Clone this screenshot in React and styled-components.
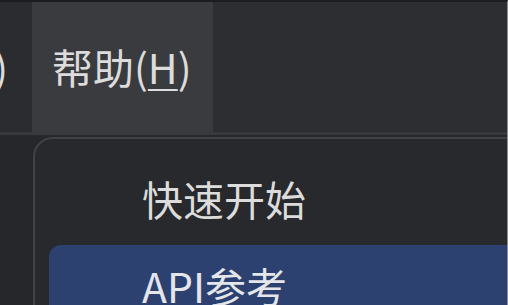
import styled, { createGlobalStyle } from "styled-components"

const Global = createGlobalStyle`
  html, body {
    margin: 0;
    padding: 0;
    background: #26272a;
  }
  * { box-sizing: border-box; }
`

const Window = styled.div`
  position: relative;
  width: 508px;
  height: 305px;
  overflow: hidden;
  background: #26272a;
  border-top: 2px solid #1c1d20;
  border-right: 1px solid #8e8f92;
  font-family: "Noto Sans CJK SC", "Noto Sans", sans-serif;
  color: #dcdcdc;
`

const MenuBar = styled.div`
  display: flex;
  height: 133px;
  background: #2d2e32;
  border-bottom: 3px solid #38393d;
`

const MenuItem = styled.div`
  display: flex;
  align-items: center;
  justify-content: ${p => (p.$clipped ? "flex-end" : "flex-start")};
  width: ${p => (p.$clipped ? "32px" : "auto")};
  overflow: hidden;
  white-space: nowrap;
  padding: 0 ${p => (p.$clipped ? "24px" : "21px")} 2px ${p => (p.$clipped ? "0" : "20px")};
  font-size: 41px;
  background: ${p => (p.$active ? "#3a3b3f" : "#2b2c30")};
  flex-shrink: 0;
`

const Key = styled.span`
  text-decoration: underline;
  text-decoration-thickness: 2px;
  text-underline-offset: 5px;
`

const Dropdown = styled.div`
  position: absolute;
  top: 135px;
  left: 33px;
  width: 520px;
  padding: 19px 14px;
  display: flex;
  flex-direction: column;
  gap: 8px;
  background: #28292c;
  border: 2px solid #414245;
  border-radius: 20px;
`

const DropItem = styled.div`
  display: flex;
  align-items: center;
  height: 79px;
  padding-left: 93px;
  font-size: 41px;
  border-radius: 12px;
  white-space: nowrap;
  background: ${p => (p.$highlight ? "#2c4170" : "transparent")};
  color: ${p => (p.$highlight ? "#e4e6ea" : "#dcdcdc")};
`

export default function App() {
  return (
    <Window>
      <Global />
      <MenuBar>
        <MenuItem $clipped>视图(<Key>V</Key>)</MenuItem>
        <MenuItem $active>帮助(<Key>H</Key>)</MenuItem>
      </MenuBar>
      <Dropdown>
        <DropItem>快速开始</DropItem>
        <DropItem $highlight>API参考</DropItem>
      </Dropdown>
    </Window>
  )
}
